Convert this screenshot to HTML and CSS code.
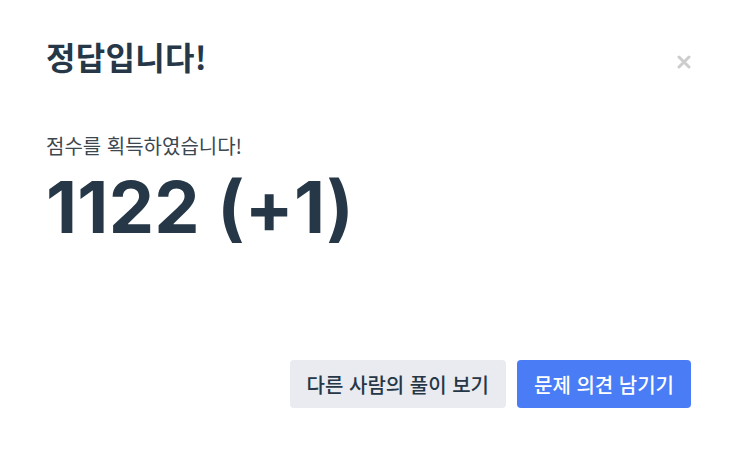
FILE: index.html
```
<!DOCTYPE html>
<html lang="ko">
<head>
<meta charset="utf-8">
<link rel="stylesheet" href="styles.css">
</head>
<body>
<div class="modal">
  <div class="header">
    <h1 class="title">정답입니다!</h1>
    <button class="close" aria-label="닫기">
      <svg width="14" height="14" viewBox="0 0 14 14"><path d="M2 2L12 12M12 2L2 12" stroke="#cdcdcd" stroke-width="3" stroke-linecap="round"/></svg>
    </button>
  </div>
  <div class="content">
    <p class="label">점수를 획득하였습니다!</p>
    <p class="score">1122 (+1)</p>
  </div>
  <div class="footer">
    <button class="btn btn-gray">다른 사람의 풀이 보기</button>
    <button class="btn btn-blue">문제 의견 남기기</button>
  </div>
</div>
</body>
</html>
```
FILE: styles.css
```
html, body { margin: 0; padding: 0; background: #fff; }
body { font-family: "Inter", "Noto Sans CJK KR", sans-serif; color: #263747; }
.modal { width: 742px; height: 450px; box-sizing: border-box; padding: 33px 51px 0 46px; display: flex; flex-direction: column; }
.header { display: flex; justify-content: space-between; align-items: center; height: 46px; }
.title { margin: 0; font-size: 32px; line-height: 46px; font-weight: 700; color: #263747; font-family: "Noto Sans CJK KR", sans-serif; letter-spacing: 0.3px; }
.close { background: none; border: 0; padding: 0; width: 14px; height: 14px; margin-top: 12px; display: flex; }
.content { margin-top: 53px; }
.label { margin: 0; font-size: 20px; line-height: 28px; color: #3c4750; font-family: "Noto Sans CJK KR", sans-serif; }
.score { margin: 4px 0 0; font-size: 72px; line-height: 86px; font-weight: 700; color: #263747; font-family: "Inter", sans-serif; letter-spacing: 0.3px; }
.footer { margin-top: auto; margin-bottom: 42px; display: flex; justify-content: flex-end; gap: 11px; }
.btn { height: 48px; border: 0; border-radius: 4px; padding: 0 17px; font-size: 20px; font-weight: 500; font-family: "Noto Sans CJK KR", sans-serif; }
.btn-gray { background: #e9ebf1; color: #263747; }
.btn-blue { background: #4a7cf6; color: #fff; }
```
